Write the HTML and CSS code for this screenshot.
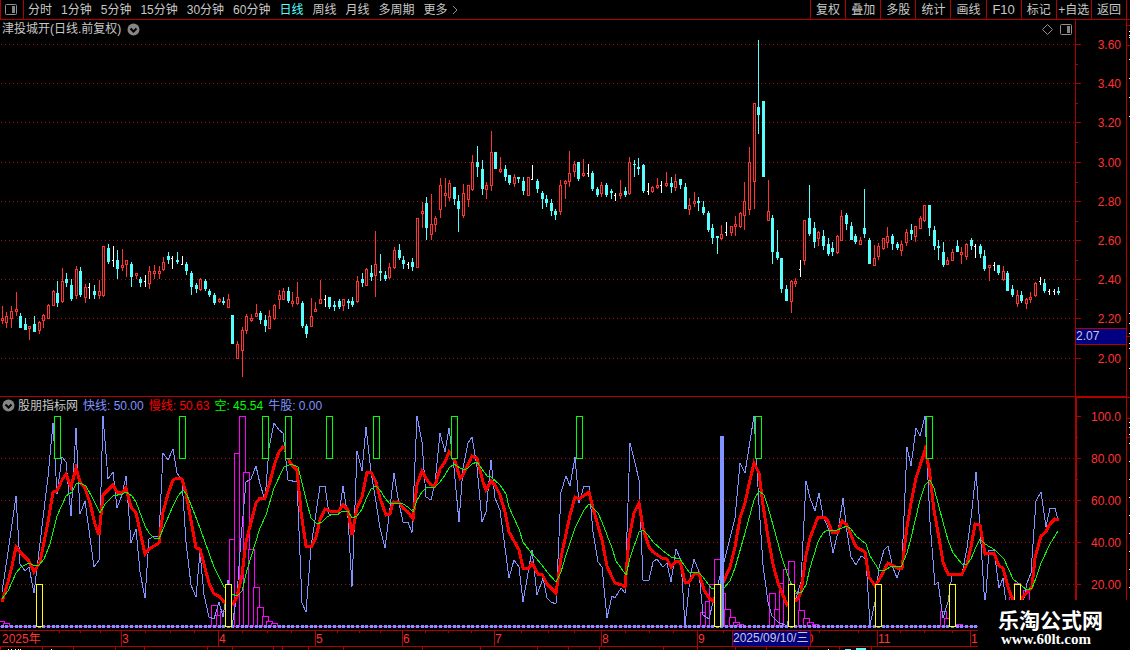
FILE: index.html
```html
<!DOCTYPE html>
<html lang="zh-CN">
<head>
  <meta charset="UTF-8">
  <meta name="viewport" content="width=device-width, initial-scale=1.0">
  <title>津投城开 日线</title>
  <link rel="stylesheet" href="styles.css">
</head>
<body>
  <header class="toolbar">
    <button class="layout-btn" aria-label="布局">
      <svg width="12" height="11" viewBox="0 0 12 11"><rect x="0.5" y="0.5" width="11" height="10" rx="1" class="icon-line"/><rect x="7" y="2" width="3" height="7" class="icon-fill"/></svg>
    </button>
    <nav class="periods">
      <button>分时</button>
      <button>1分钟</button>
      <button>5分钟</button>
      <button>15分钟</button>
      <button>30分钟</button>
      <button>60分钟</button>
      <button class="active">日线</button>
      <button>周线</button>
      <button>月线</button>
      <button>多周期</button>
      <button>更多<svg class="more" width="6" height="10" viewBox="0 0 6 10"><path d="M1 1L5 5L1 9" class="icon-line"/></svg></button>
    </nav>
    <div class="tools">
      <button>复权</button>
      <button>叠加</button>
      <button>多股</button>
      <button>统计</button>
      <button>画线</button>
      <button class="latin">F10</button>
      <button>标记</button>
      <button>+自选</button>
      <button>返回</button>
    </div>
  </header>

  <main class="workspace">
    <section class="panel">
      <div class="plot">
        <div class="title">
          <span>津投城开(日线.前复权)</span>
          <button aria-label="展开"><svg width="13" height="13" viewBox="0 0 13 13"><circle cx="6.5" cy="6.5" r="6" class="icon-fill"/><path d="M3.5 5.5L6.5 8.5L9.5 5.5" class="icon-cut"/></svg></button>
          <div class="title-icons">
            <svg width="11" height="11" viewBox="0 0 11 11"><path d="M5.5 0.5L10.5 5.5L5.5 10.5L0.5 5.5Z" class="icon-line"/></svg>
            <svg width="12" height="11" viewBox="0 0 12 11"><rect x="0.5" y="0.5" width="11" height="10" rx="1" class="icon-line"/><rect x="7" y="2" width="3" height="7" class="icon-fill"/></svg>
          </div>
        </div>
        <svg id="price" class="chart" height="356" viewBox="0 40 1075 356" preserveAspectRatio="none"></svg>
      </div>
      <svg id="price-axis" class="axis" width="51" height="376" viewBox="1075 20 51 376"></svg>
    </section>

    <section class="panel">
      <div class="plot">
        <div class="legend">
          <button aria-label="展开"><svg width="13" height="13" viewBox="0 0 13 13"><circle cx="6.5" cy="6.5" r="6" class="icon-fill"/><path d="M3.5 5.5L6.5 8.5L9.5 5.5" class="icon-cut"/></svg></button>
          <span>股朋指标网</span>
          <span class="fast">快线: 50.00</span>
          <span class="slow">慢线: 50.63</span>
          <span class="empty">空: 45.54</span>
          <span class="fast">牛股: 0.00</span>
        </div>
        <svg id="indicator" class="chart" height="214" viewBox="0 416 1075 214" preserveAspectRatio="none"></svg>
      </div>
      <svg id="indicator-axis" class="axis" width="51" height="234" viewBox="1075 396 51 234"></svg>
    </section>
    <svg id="edge" class="edge" width="4" height="610" viewBox="1126 20 4 610"></svg>
  </main>

  <footer>
    <svg id="dates" class="chart" height="20" viewBox="0 630 1130 20" preserveAspectRatio="none"></svg>
  </footer>

  <div class="brand">
    <strong>乐淘公式网</strong>
    <a href="#">www.60lt.com</a>
  </div>

  <script src="script.js"></script>
</body>
</html>
```

FILE: styles.css
```css
* { box-sizing: border-box; }
body { margin: 0; background: #000; color: #c8c8c8; font-family: "Liberation Sans", "Noto Sans CJK SC", sans-serif; font-size: 12px; line-height: 18px; position: relative; overflow: hidden; }
button { background: none; border: 0; padding: 0; margin: 0; color: inherit; font: inherit; cursor: pointer; white-space: nowrap; }
svg { display: block; }

.toolbar { display: flex; height: 20px; border-bottom: 1px solid #b00000; padding-right: 3px; }
.layout-btn { display: flex; align-items: center; padding: 0 6px 0 4px; border-left: 1px solid #b00000; border-right: 1px solid #b00000; }
.periods { display: flex; gap: 9px; padding-left: 4px; }
.periods button { display: flex; align-items: center; }
.periods .active { color: #54ffff; }
.more { margin-left: 4px; }
.tools { display: grid; grid-template-columns: repeat(9, 1fr); width: 317px; margin-left: auto; border-right: 1px solid #b00000; }
.tools button { border-left: 1px solid #b00000; }
.tools .latin { font-size: 13px; }

.workspace { position: relative; padding-right: 4px; }
.panel { display: flex; }
.plot { flex: 1; min-width: 0; }
.chart { width: 100%; }
.chart, .axis, .edge { shape-rendering: crispEdges; }
.axis { flex: none; }
.edge { position: absolute; top: 0; right: 0; }

.title { display: flex; align-items: center; gap: 6px; height: 20px; padding: 0 3px 2px 2px; }
.title-icons { display: flex; gap: 7px; margin-left: auto; }
.legend { display: flex; align-items: center; gap: 5px; height: 20px; padding: 0 0 2px 2px; border-top: 1px solid #b00000; line-height: 16px; }
.legend button { margin-right: -2px; }

.icon-line { fill: none; stroke: #909090; }
.icon-fill { fill: #858585; }
.icon-cut { fill: none; stroke: #000; stroke-width: 2; }

.fast { color: #8093ff; }
.slow { color: #ff0000; }
.empty { color: #00ff00; }

.grid-line { stroke: #a01010; stroke-dasharray: 1 3; }
.frame { fill: #b00000; }
.label { fill: #ff3232; font-size: 12px; }
.cursor { fill: #000080; }
.cursor-label { fill: #c8c8d8; font-size: 12px; }
.up { fill: #ff3232; }
.up-body { fill: #000; stroke: #ff3232; }
.down { fill: #54ffff; }
.flat { fill: #fff; }

.bar { fill: #000; stroke: #ff00ff; }
.sell { fill: #000; stroke: #00ff00; }
.buy { fill: #000; stroke: #ffff00; }
.base { fill: #ff00ff; }
.dot { fill: #8093ff; }
.line-fast { fill: none; stroke: #8093ff; }
.line-slow { fill: none; stroke: #ff0000; stroke-width: 3; }
.line-empty { fill: none; stroke: #00ff00; }

.brand { position: absolute; right: 0; bottom: 0; width: 152px; height: 50px; padding: 7px 0 0 20px; background: #000; color: #fff; }
.brand strong { display: block; font-family: "Noto Sans CJK SC", sans-serif; font-size: 21px; line-height: 24px; }
.brand a { display: block; padding-left: 3px; color: #fff; font-family: "Liberation Serif", serif; font-size: 15px; font-weight: bold; line-height: 16px; text-decoration: none; }
```

FILE: script.js
```js
// one entry per day: kind (r up, c down, w flat), high, body top, body bottom, low
const days = `
r 306 318 321 324;r 312 316 323 328;r 306 311 319 328;r 292 309 312 316;c 313 316 328 328;c 318 324 330 330;r 326 326 329 340;c 316 324 332 332;r 321 322 331 334;r 314 315 321 328;
r 304 305 319 319;r 290 291 306 306;c 281 293 303 307;r 268 281 302 303;c 273 279 283 287;c 279 285 299 301;r 266 269 296 299;c 267 271 295 297;r 284 287 298 303;w 283 287 288 299;
c 285 291 295 299;r 280 291 296 299;r 246 246 296 297;c 244 248 262 264;w 246 260 261 267;c 250 260 269 279;r 249 265 268 271;r 260 260 265 277;c 262 264 277 287;r 273 273 276 279;
c 277 279 283 287;w 275 281 282 287;r 266 271 284 289;r 265 271 274 279;r 266 271 274 279;r 257 262 270 271;c 252 256 260 264;w 256 258 259 269;c 252 260 262 264;w 256 264 265 265;
c 262 264 271 275;c 271 273 287 295;c 283 285 289 293;r 278 279 290 291;c 279 281 289 291;c 289 291 295 297;c 293 295 303 305;r 298 299 302 303;c 297 301 303 305;r 294 299 308 308;
c 315 315 344 344;r 341 344 359 359;r 327 330 351 377;r 314 316 331 334;r 314 318 321 322;r 304 313 317 317;c 311 313 320 324;c 315 320 326 332;r 310 316 329 329;r 304 305 319 320;
r 290 295 300 309;r 288 291 300 300;c 287 291 301 303;r 292 301 304 307;r 282 297 304 305;c 301 303 326 328;c 324 326 334 338;r 298 316 327 327;r 302 309 312 312;r 280 299 304 304;
w 295 299 300 307;c 297 297 307 309;c 301 305 307 311;c 299 301 307 309;r 299 299 306 311;c 299 301 303 309;c 297 301 305 307;r 276 281 302 303;c 273 279 283 287;r 268 269 286 286;
c 265 273 277 281;r 231 264 276 297;c 254 271 273 281;c 271 275 279 281;r 263 267 278 279;r 247 250 268 269;c 244 250 258 260;c 256 260 264 269;w 262 264 265 269;c 258 262 267 271;
r 218 218 268 268;r 202 211 214 228;c 197 203 228 240;r 194 224 235 240;r 216 218 225 232;r 178 185 210 218;r 178 193 196 207;r 180 183 198 201;c 187 187 199 205;c 195 201 209 232;
r 184 193 216 218;r 185 185 200 207;r 155 162 190 191;c 146 162 167 177;c 160 169 189 195;r 182 185 190 199;r 131 152 186 191;c 152 152 169 169;r 157 169 172 173;c 165 169 177 181;
c 175 175 183 185;r 174 177 184 187;c 177 177 179 183;c 177 181 191 195;r 177 177 196 196;w 165 179 180 180;c 179 181 189 193;c 191 193 199 209;c 195 199 203 207;c 199 203 211 216;
c 209 211 215 220;r 180 185 212 215;r 180 181 184 199;r 151 173 182 187;r 161 164 172 177;c 162 162 179 181;r 159 173 176 177;w 164 173 174 177;c 171 173 189 191;c 187 189 195 197;
r 182 185 194 197;c 183 185 195 197;c 189 191 193 199;w 193 195 196 201;r 180 193 196 199;c 187 191 195 197;r 157 162 194 195;c 160 164 165 177;c 158 167 169 175;c 164 165 191 193;
w 183 191 192 195;r 186 187 192 193;r 178 185 188 189;w 181 185 186 193;r 172 183 186 187;c 177 183 187 193;r 174 181 188 191;c 179 179 185 189;c 183 187 209 209;r 198 205 210 215;
r 192 201 204 207;c 197 201 203 211;c 201 207 213 215;c 211 213 230 232;c 224 228 238 244;c 236 236 238 254;r 225 234 239 240;w 222 232 233 236;r 226 226 233 236;r 216 224 227 236;
r 212 213 227 228;r 182 201 216 230;r 147 162 210 215;r 103 103 182 209;c 40 107 115 134;c 101 101 177 177;r 180 211 221 221;c 215 218 252 264;c 230 252 258 260;c 258 258 289 293;
c 285 289 301 301;r 280 281 302 313;r 278 281 284 287;w 260 269 270 277;r 220 220 261 265;c 185 218 234 236;c 222 228 242 248;r 231 232 239 246;c 230 236 246 250;c 238 244 254 256;
c 242 248 252 256;r 235 236 253 254;r 210 216 241 241;c 213 215 224 230;c 222 226 240 240;c 234 236 242 244;r 237 240 245 245;c 189 228 234 238;c 238 240 264 264;r 245 258 266 266;
r 243 246 257 260;r 238 238 249 250;r 227 236 243 248;c 234 236 244 250;c 242 244 248 250;r 241 244 251 256;r 229 232 243 246;c 224 230 234 240;r 226 226 237 242;r 216 218 229 229;
r 205 205 221 222;c 205 205 228 236;c 226 230 246 250;c 240 246 248 260;c 242 252 265 267;r 257 260 265 265;r 249 252 261 261;c 240 246 252 252;r 247 252 255 264;r 243 244 257 260;
c 238 240 246 250;w 244 246 247 258;c 244 246 254 258;c 250 256 269 271;r 265 265 268 281;w 262 265 266 271;c 265 265 273 275;r 266 271 280 281;c 271 273 291 291;c 285 289 295 297;
r 290 295 304 307;c 291 295 301 303;r 298 299 304 309;r 292 297 300 303;r 282 283 296 297;w 277 281 282 285;c 279 283 291 293;w 289 291 292 295;w 289 291 292 295;c 287 291 293 295`;

const fast = '2,592 8,552 16,496 20,564 25,571 29,567 34,593 43,518 48,477 53,423 57,494 62,457 66,462 71,516 76,428 80,514 85,501 94,567 99,560 103,416 108,479 113,472 117,508 122,495 126,476 131,543 136,529 140,572 145,598 149,539 154,536 159,536 163,453 168,460 173,449 177,473 182,480 186,542 191,585 196,597 200,552 204,595 209,617 214,619 219,602 223,617 228,580 232,626 237,595 241,538 246,482 251,479 256,466 260,484 265,500 269,448 274,423 279,430 283,433 288,480 297,482 302,603 306,612 311,547 320,486 325,486 329,514 339,514 343,486 348,518 352,587 357,451 362,471 366,427 371,472 376,502 380,528 385,548 390,508 394,473 398,498 403,522 408,522 412,533 417,416 422,442 426,497 431,500 435,483 440,433 445,452 449,428 454,468 459,522 463,468 468,443 472,437 477,467 482,522 486,512 491,460 495,498 500,510 509,578 514,560 519,567 523,602 532,550 537,595 543,578 547,598 551,602 556,604 561,492 566,476 570,486 575,457 579,503 584,486 589,486 593,532 598,562 602,567 607,618 612,596 615,598 621,588 625,593 630,443 635,463 639,480 643,580 649,580 653,562 657,559 663,567 667,563 671,582 676,549 681,560 685,626 690,578 694,559 699,572 703,615 709,619 713,602 724,562 735,518 740,463 745,473 754,416 759,505 763,565 768,602 772,616 778,622 787,626 791,605 796,598 801,582 806,481 810,498 815,511 819,493 823,516 829,530 833,553 838,532 843,498 847,532 851,557 856,565 861,556 866,559 870,625 875,602 879,568 884,550 888,546 893,568 897,578 902,563 907,447 911,466 916,428 920,436 925,416 930,522 935,585 938,582 943,618 948,602 952,575 957,574 962,574 967,548 971,518 976,472 980,528 985,608 989,550 994,550 999,588 1003,578 1007,612 1022,608 1027,583 1031,573 1036,501 1041,492 1046,527 1050,508 1055,508 1058,520';
const slow = '2,602 8,582 12,566 16,547 21,553 29,561 34,572 40,562 48,522 53,492 57,491 62,480 66,474 71,487 76,468 80,482 85,488 90,503 95,524 99,535 103,495 108,490 113,485 117,492 123,492 126,488 131,507 136,513 145,554 149,549 159,543 163,512 168,494 173,480 177,478 182,479 186,493 196,548 200,549 209,583 214,594 219,596 224,602 233,604 237,597 242,575 246,542 256,503 260,498 265,498 269,485 275,463 279,452 283,447 285,448 290,463 297,470 301,512 306,546 312,546 316,537 320,520 325,509 330,511 338,512 343,505 348,510 352,535 357,508 362,497 367,472 371,472 376,482 380,498 386,515 390,514 393,502 399,502 403,508 408,512 413,519 417,485 422,471 427,480 431,485 435,486 440,469 445,462 449,452 454,458 460,478 463,475 472,456 477,458 483,482 486,490 491,481 495,485 500,495 505,512 509,532 519,550 523,568 529,568 532,563 538,574 542,574 547,584 556,593 561,558 570,515 575,497 579,499 589,492 593,508 602,540 607,566 612,577 615,583 622,585 625,587 629,538 634,513 639,503 643,528 649,547 653,552 662,558 667,559 671,567 676,561 680,561 685,582 689,582 694,574 699,573 704,590 709,598 713,601 722,585 730,567 735,547 740,518 745,503 750,480 754,463 759,473 763,505 768,537 773,564 778,583 787,605 798,599 801,592 806,555 810,538 818,517 824,517 828,521 832,532 838,532 842,521 847,525 851,535 856,547 865,552 869,577 875,586 879,580 888,563 897,568 902,568 907,527 911,503 916,478 920,466 925,450 929,468 934,510 939,538 943,562 948,574 962,574 967,564 971,547 975,524 980,525 985,554 994,553 999,566 1003,568 1008,587 1012,598 1022,598 1032,587 1035,558 1041,536 1045,533 1050,524 1055,519 1059,520';
const empty = '2,599 8,591 16,573 21,567 29,563 35,566 39,565 44,559 50,544 57,516 66,496 72,492 76,484 80,483 86,486 93,499 100,513 105,504 113,496 122,494 126,492 132,496 136,502 145,526 149,533 154,538 159,539 163,529 173,506 178,496 183,490 187,495 197,520 205,542 214,567 224,587 232,594 237,596 242,591 247,570 260,528 266,515 274,488 284,467 291,464 298,467 302,483 307,503 311,518 317,524 322,522 327,517 331,515 338,514 343,511 348,511 352,518 357,516 362,509 367,497 371,489 376,486 380,490 385,498 390,504 397,503 403,504 408,507 413,512 417,500 422,492 427,487 435,487 440,482 445,475 449,468 454,464 460,468 464,470 468,468 472,464 477,462 487,476 491,477 500,485 506,494 509,507 519,529 523,542 529,550 542,565 547,572 556,582 561,572 566,555 575,528 584,510 589,504 593,508 598,513 602,522 612,548 616,561 626,575 630,558 639,532 643,530 648,535 653,542 662,550 671,557 680,559 689,572 698,572 703,577 712,589 724,588 730,581 735,568 745,533 754,500 759,491 764,495 768,507 773,525 782,558 787,573 792,586 796,592 801,593 806,585 810,568 818,542 823,533 828,530 837,530 847,526 851,529 856,536 866,544 870,556 879,570 885,570 892,566 901,567 907,553 911,538 920,500 925,485 930,480 934,488 943,522 948,540 953,553 962,564 967,564 971,559 976,547 980,539 985,544 995,550 1004,559 1013,579 1018,583 1027,590 1032,588 1036,578 1041,563 1050,544 1058,531';

// left edge and top of each volume step
const bars = [[-2, 621], [3, 623], [211, 605], [216, 615], [220, 611], [225, 600], [229, 539], [234, 453], [239, 416], [243, 472], [248, 549], [253, 587], [257, 607], [262, 616], [266, 621], [271, 623], [700, 612], [705, 601], [709, 584], [714, 559], [719, 593], [724, 609], [729, 617], [733, 622], [737, 624], [769, 593], [774, 609], [779, 583], [783, 569], [788, 561], [793, 593], [798, 610], [803, 618], [807, 622], [812, 624], [940, 611], [944, 618], [956, 624], [1009, 597], [1014, 583], [1023, 590]];
const sells = [54, 179, 262, 285, 326, 373, 451, 576, 755, 926];
const buys = [36, 225, 714, 788, 875, 949, 1014];

const rect = (cls, x, y, w, h) => `<rect class="${cls}" x="${x}" y="${y}" width="${w}" height="${h}"/>`;
const box = (cls, x, y, w, h) => rect(cls, x + 0.5, y + 0.5, w, h);
const text = (cls, x, y, s, anchor = 'start') => `<text class="${cls}" x="${x}" y="${y}" text-anchor="${anchor}">${s}</text>`;
const gridLine = y => `<path class="grid-line" d="M1 ${y + 0.5}H1075"/>`;
const line = (cls, pts) => `<polyline class="${cls}" points="${pts}"/>`;
const dayX = i => Math.floor(2.3 + i * 4.613);
const draw = (id, parts) => { document.getElementById(id).innerHTML = parts.join(''); };

const priceRows = [44, 83, 122, 162, 201, 240, 279, 318, 358];
const rangeRows = [416, 458, 500, 542, 584];

function candle(row, i) {
  const [kind, ...v] = row.trim().split(' ');
  const [high, top, bottom, low] = v.map(Number);
  const x = dayX(i);
  if (kind === 'w') return rect('flat', x, high, 1, low - high) + rect('flat', x - 1, top, 2, 1);
  if (kind === 'c') return rect('down', x, high, 1, low - high) + rect('down', x - 1, top, 3, bottom - top);
  return rect('up', x, high, 1, low - high) + box('up-body', x - 1, top, 2, bottom - top - 1);
}

draw('price', [...priceRows.map(gridLine), ...days.split(';').map(candle)]);

draw('price-axis', [
  rect('frame', 1075, 20, 1, 376),
  ...priceRows.map((y, i) => rect('frame', 1076, y, 5, 1) + text('label', 1121, y + 5, (3.6 - i * 0.2).toFixed(2), 'end')),
  ...[64, 103, 142, 182, 221, 260, 299, 338].map(y => rect('frame', 1076, y, 2, 1)),
  rect('frame', 1076, 328, 50, 17),
  rect('cursor', 1076, 329, 50, 15),
  text('cursor-label', 1076, 340, '2.07')
]);

draw('indicator', [
  ...rangeRows.slice(1).map(gridLine),
  rect('base', 0, 626, 978, 1),
  ...bars.map(([x, y]) => box('bar', x, y, 6, 626 - y)),
  ...Array.from({ length: 212 }, (_, i) => rect('dot', dayX(i) - 1, 625, 3, 3)),
  line('line-fast', fast),
  line('line-slow', slow),
  line('line-empty', empty),
  ...sells.map(x => box('sell', x, 416, 6, 42)),
  rect('dot', 720, 436, 4, 191),
  ...buys.map(x => box('buy', x, 584, 6, 42))
]);

draw('indicator-axis', [
  rect('frame', 1075, 396, 2, 234),
  rect('frame', 1075, 396, 51, 2),
  ...rangeRows.map((y, i) => rect('frame', 1077, y, 4, 1) + text('label', 1121, y + 5, i ? (100 - i * 20).toFixed(2) : '100.0', 'end')),
  ...[437, 479, 521, 563].map(y => rect('frame', 1077, y, 1, 1))
]);

draw('edge', [
  rect('frame', 1126, 20, 1, 610),
  rect('frame', 1125, 396, 2, 234),
  ...[25, 45, 336, 397, 418, 437].map(y => rect('frame', 1127, y, 3, 1)),
  ...[31, 35, 37, 59, 78, 97, 116, 313, 323, 333, 343, 348, 368, 422, 427, 434, 443, 461, 479, 497, 515, 533, 551, 569, 587].map(y => rect('flat', 1129, y, 1, 1))
]);

draw('dates', [
  rect('frame', 0, 630, 1130, 1),
  rect('frame', 0, 646, 1130, 1),
  text('label', 2, 643, '2025年'),
  ...[[121, 3], [218, 4], [315, 5], [402, 6], [494, 7], [601, 8], [697, 9], [799, 10], [877, 11], [970, 1]].map(([x, s]) => rect('frame', x, 631, 1, 15) + text('label', x + 1, 643, s)),
  ...[59, 80, 100, 145, 170, 194, 242, 267, 291, 337, 359, 380, 425, 448, 471, 521, 548, 574, 625, 649, 673, 723, 819, 858, 900, 924, 952].map(x => rect('frame', x, 631, 1, 2)),
  ...[0, 42, 73, 115, 144, 207, 232, 273, 282, 308, 343, 422, 480, 537, 568, 599, 663, 697, 735, 766, 808, 839, 871].map(x => rect('frame', x, 647, 1, 3)),
  ...[8, 11, 15, 18, 20, 51, 828].map(x => rect('flat', x, 649, 1, 1)),
  rect('down', 845, 649, 6, 1),
  rect('down', 856, 648, 10, 2),
  rect('cursor', 733, 631, 77, 15),
  text('cursor-label', 733, 642, '2025/09/10/三'),
  rect('frame', 732, 631, 1, 15),
  rect('frame', 810, 631, 1, 15)
]);
```
